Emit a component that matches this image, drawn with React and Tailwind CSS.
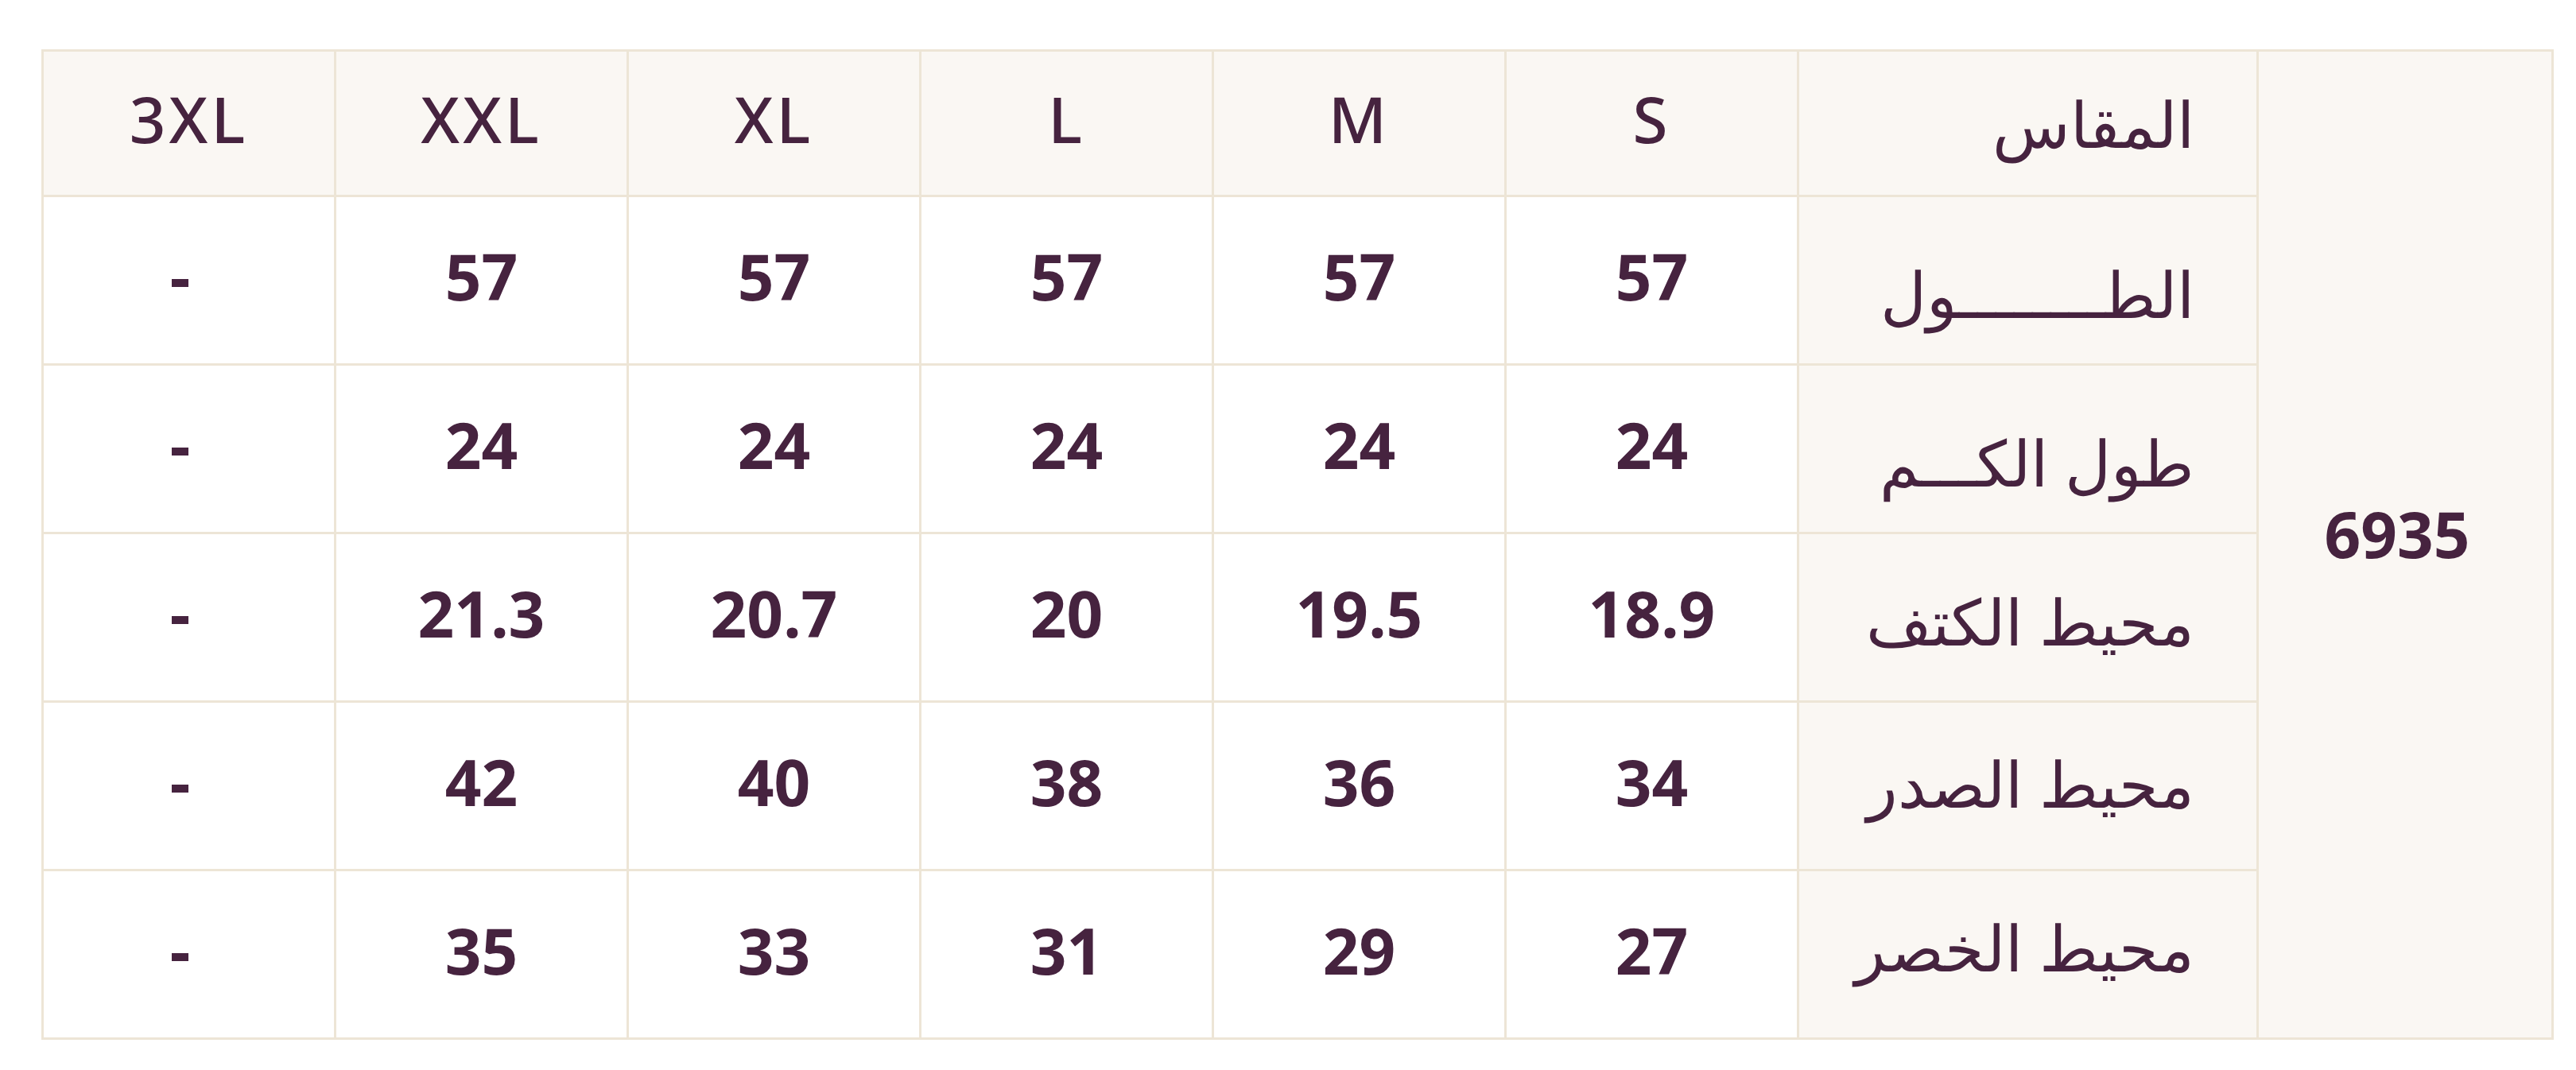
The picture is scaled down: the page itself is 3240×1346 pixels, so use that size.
import React from "react";

const sizes = ["S", "M", "L", "XL", "XXL", "3XL"];
const tw = (n) => "\u0640".repeat(n);

// pad nudges each label a little, the arabic baselines sit unevenly in the original
const rows = [
    { label: "الط" + tw(8) + "ول", pad: "pt-[32px]", values: ["57", "57", "57", "57", "57", "-"] },
    { label: "طول الك" + tw(3) + "م", pad: "pt-[32px]", values: ["24", "24", "24", "24", "24", "-"] },
    { label: "محيط الكتف", pad: "pt-[8px]", values: ["18.9", "19.5", "20", "20.7", "21.3", "-"] },
    { label: "محيط الصدر", pad: "pb-[8px]", values: ["34", "36", "38", "40", "42", "-"] },
    { label: "محيط الخصر", pad: "pb-[20px]", values: ["27", "29", "31", "33", "35", "-"] },
];

const cell = "border-[3px] border-[#ede5d6] text-center align-middle";

export default function App() {
    return (
        <div className="min-h-screen bg-white pt-[62px] pl-[52px] font-['Noto_Sans',sans-serif] text-[#46233f]">
            <table dir="rtl" className="w-[3157px] table-fixed border-collapse border-[3px] border-[#ede5d6]">
                <colgroup>
                    <col className="w-[371px]" />
                    <col className="w-[578px]" />
                    {sizes.map((s) => (
                        <col key={s} className="w-[368px]" />
                    ))}
                </colgroup>
                <tbody>
                    {/* header row, code cell spans the whole table */}
                    <tr className="h-[183px] bg-[#faf7f3]">
                        <td rowSpan={6} className={`${cell} bg-[#faf7f3] pb-[28px] pr-[20px] text-[80px] font-bold`}>
                            6935
                        </td>
                        <td className={`${cell} !text-right pr-[78px] text-[80px] font-medium`}>المقاس</td>
                        {sizes.map((s) => (
                            <td key={s} className={`${cell} pb-[12px] text-[80px] font-medium tracking-[4px]`}>
                                {s}
                            </td>
                        ))}
                    </tr>
                    {rows.map((r) => (
                        <tr key={r.label} className="h-[212px]">
                            <td className={`${cell} ${r.pad} !text-right pr-[78px] bg-[#faf7f3] text-[80px]`}>
                                {r.label}
                            </td>
                            {r.values.map((v, i) => (
                                <td
                                    key={i}
                                    className={`${cell} bg-white pb-[12px] text-[80px] font-bold ${v === "-" ? "pr-[22px]" : ""}`}
                                >
                                    {v}
                                </td>
                            ))}
                        </tr>
                    ))}
                </tbody>
            </table>
        </div>
    );
}
